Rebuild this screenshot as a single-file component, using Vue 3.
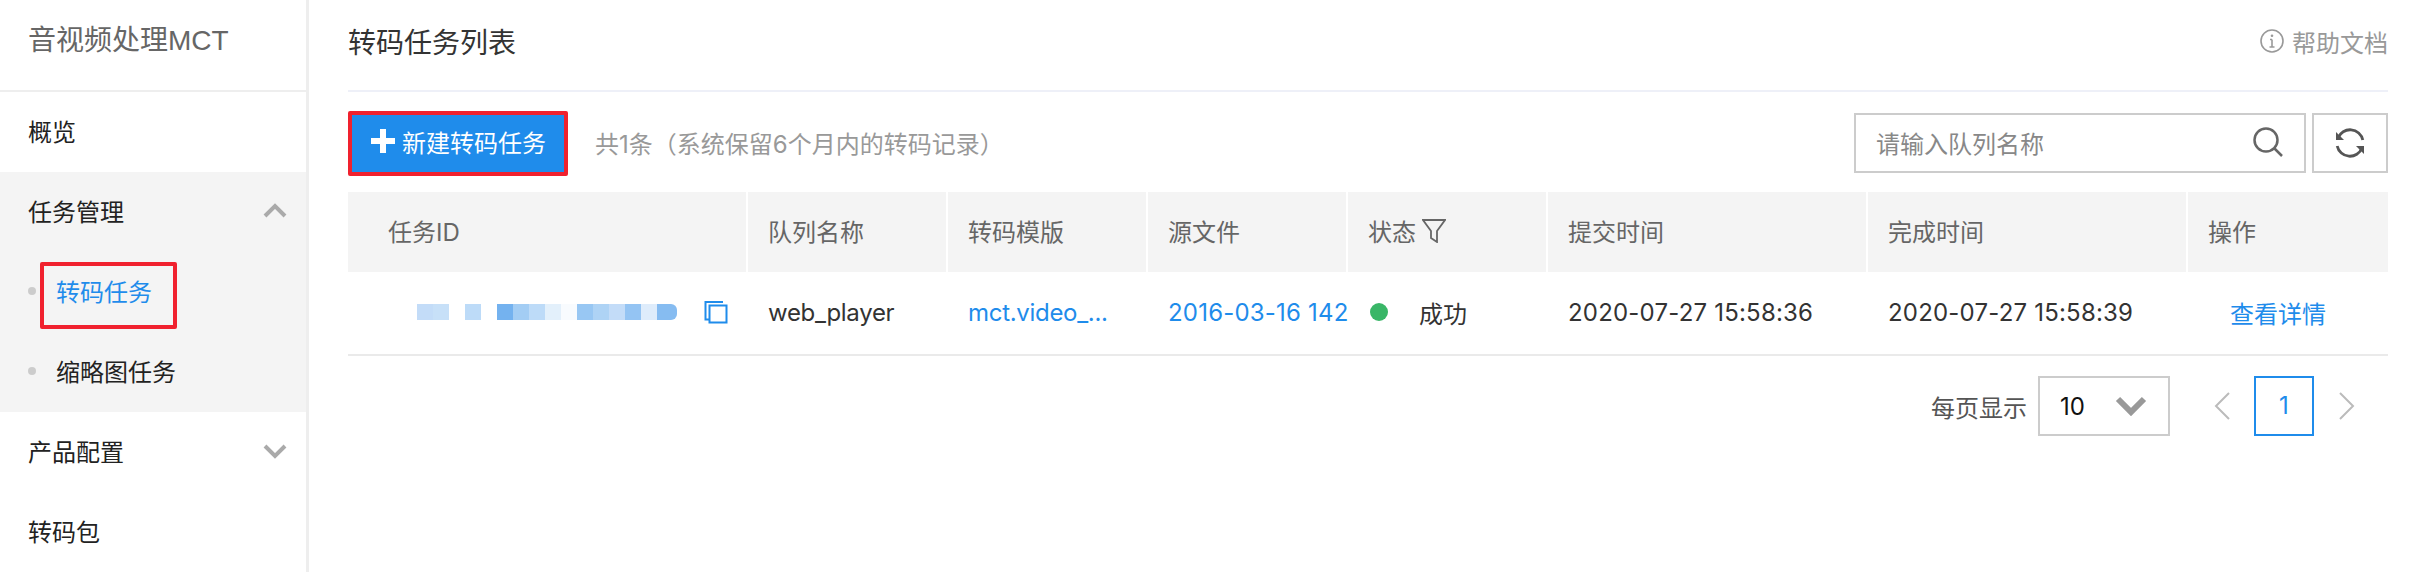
<template>
  <div class="page">
    <aside class="sidebar">
      <div class="brand">音视频处理MCT</div>
      <div class="nav-item">概览</div>
      <div class="nav-group">
        <div class="nav-item">
          任务管理
          <svg class="chevron" viewBox="0 0 24 16"><path d="M2 13 12 3l10 10" /></svg>
        </div>
        <div class="sub-item active">
          <span class="dot"></span>转码任务
          <span class="mark"></span>
        </div>
        <div class="sub-item"><span class="dot"></span>缩略图任务</div>
      </div>
      <div class="nav-item">
        产品配置
        <svg class="chevron" viewBox="0 0 24 16"><path d="M2 3l10 10L22 3" /></svg>
      </div>
      <div class="nav-item">转码包</div>
    </aside>

    <main class="content">
      <header class="top">
        <h1>转码任务列表</h1>
        <a class="help">
          <svg viewBox="0 0 24 24" width="24" height="24">
            <circle cx="12" cy="12" r="11" />
            <path d="M12 10.5V18M9.5 18h5M10 10.5h2" />
            <circle class="fill" cx="12" cy="6.8" r="1.3" />
          </svg>
          帮助文档
        </a>
      </header>

      <div class="toolbar">
        <button class="create">
          <svg viewBox="0 0 24 24" width="24" height="24"><path d="M12 0v24M0 12h24" /></svg>
          新建转码任务
        </button>
        <span class="hint">共1条（系统保留6个月内的转码记录）</span>
        <div class="search">
          <span>请输入队列名称</span>
          <svg viewBox="0 0 30 30" width="30" height="30">
            <circle cx="13" cy="13" r="11.5" />
            <path d="M21 21l8 8" />
          </svg>
        </div>
        <button class="refresh">
          <svg viewBox="0 0 32 32" width="32" height="32">
            <path d="M4 11A13 13 0 0 1 28.800 13" />
            <path d="M28 21A13 13 0 0 1 3.200 19" />
            <path class="fill" d="M2 5v8h8zM30 27v-8h-8z" />
          </svg>
        </button>
      </div>

      <div class="table">
        <div class="th first">任务ID</div>
        <div class="th">队列名称</div>
        <div class="th">转码模版</div>
        <div class="th">源文件</div>
        <div class="th">
          状态
          <svg class="filter" viewBox="0 0 24 24" width="24" height="24">
            <path d="M1 1h22l-8 11v11l-6-4v-7z" />
          </svg>
        </div>
        <div class="th">提交时间</div>
        <div class="th">完成时间</div>
        <div class="th">操作</div>

        <div class="td id-cell">
          <span class="blur">
            <i v-for="(c, i) in blurCells" :key="i" :style="{ background: c }"></i>
          </span>
          <svg class="copy" viewBox="0 0 24 24" width="24" height="24">
            <path d="M19 2H1.500v17.500H5" />
            <path d="M5.500 5.500H22.500v17H5.500z" />
          </svg>
        </div>
        <div class="td latin">web_player</div>
        <div class="td link latin">mct.video_...</div>
        <div class="td link time">2016-03-16 142</div>
        <div class="td state"><span class="ok"></span>成功</div>
        <div class="td time">2020-07-27 15:58:36</div>
        <div class="td time">2020-07-27 15:58:39</div>
        <div class="td link action">查看详情</div>
      </div>

      <div class="pager">
        <span class="per">每页显示</span>
        <div class="select">
          10
          <svg viewBox="0 0 32 20" width="32" height="20"><path d="M3 3l13 13L29 3" /></svg>
        </div>
        <svg class="arrow" viewBox="0 0 16 28" width="16" height="28"><path d="M15 1 2 14l13 13" /></svg>
        <span class="page-no">1</span>
        <svg class="arrow" viewBox="0 0 16 28" width="16" height="28"><path d="M1 1l13 13L1 27" /></svg>
      </div>
    </main>
  </div>
</template>

<script setup>
const blurCells = [
  '#c3dcf8', '#c7e0f8', '#fff', '#bddbf8', '#fff',
  '#74b2ef', '#a3cdf4', '#bddbf8', '#e3f0fb', '#f8fbfe',
  '#98c7f3', '#aed3f5', '#c3dcf8', '#94c4f3', '#deecfb', '#86bcf1'
]
</script>

<style>
html,
body {
  margin: 0;
  background: #fff;
}
</style>

<style scoped>
.page {
  display: flex;
  width: 2418px;
  height: 572px;
  overflow: hidden;
  font-family: Inter, "Noto Sans CJK SC", sans-serif;
  font-size: 24px;
  color: #333;
}
svg {
  fill: none;
  stroke: currentColor;
}
svg .fill {
  fill: currentColor;
  stroke: none;
}

.sidebar {
  width: 306px;
  flex: none;
  border-right: 3px solid #eee;
}
.brand {
  height: 82px;
  line-height: 82px;
  padding-left: 28px;
  padding-bottom: 8px;
  border-bottom: 2px solid #eee;
  font-family: "Liberation Sans", "Noto Sans CJK SC", sans-serif;
  font-size: 28px;
  color: #666;
}
.nav-item {
  display: flex;
  align-items: center;
  justify-content: space-between;
  box-sizing: border-box;
  height: 80px;
  padding: 0 19px 3px 28px;
  color: #222;
}
.nav-group {
  background: #f4f4f4;
}
.chevron {
  width: 24px;
  height: 16px;
  color: #aaa;
  stroke-width: 4;
}
.sub-item {
  position: relative;
  display: flex;
  align-items: center;
  box-sizing: border-box;
  height: 80px;
  padding: 0 0 3px 28px;
  color: #222;
}
.sub-item.active {
  color: #1f8ceb;
}
.dot {
  width: 8px;
  height: 8px;
  margin-right: 20px;
  border-radius: 50%;
  background: #ccc;
}
.mark {
  position: absolute;
  left: 40px;
  top: 10px;
  width: 129px;
  height: 59px;
  border: 4px solid #f0212e;
  border-radius: 2px;
}

.content {
  flex: 1;
  min-width: 0;
  padding: 0 30px 0 39px;
}
.top {
  display: flex;
  align-items: center;
  justify-content: space-between;
  height: 82px;
  padding-bottom: 8px;
  border-bottom: 2px solid #eef0f8;
}
h1 {
  margin: 0;
  font-size: 28px;
  font-weight: 400;
  color: #333;
}
.help {
  display: flex;
  align-items: center;
  gap: 8px;
  color: #999;
}
.help svg {
  stroke-width: 1.6;
}

.toolbar {
  display: flex;
  align-items: center;
  height: 64px;
  margin-top: 19px;
}
.create {
  display: flex;
  align-items: center;
  gap: 7px;
  width: 220px;
  height: 65px;
  padding: 0 0 4px 19px;
  border: 4px solid #f0212e;
  border-radius: 2px;
  background: #1f8ceb;
  color: #fff;
  font: inherit;
}
.create svg {
  stroke-width: 6;
}
.hint {
  margin-left: 27px;
  margin-bottom: 2px;
  color: #999;
}
.search {
  display: flex;
  align-items: center;
  justify-content: space-between;
  box-sizing: border-box;
  width: 452px;
  height: 60px;
  margin-left: auto;
  padding: 0 21px 2px 20px;
  border: 2px solid #ccc;
  color: #888;
}
.search svg {
  color: #666;
  stroke-width: 2.500;
}
.refresh {
  display: flex;
  align-items: center;
  justify-content: center;
  box-sizing: border-box;
  width: 76px;
  height: 60px;
  margin-left: 6px;
  padding: 0;
  border: 2px solid #ccc;
  background: #fff;
  color: #555;
}
.refresh svg {
  stroke-width: 2.800;
}

.table {
  display: grid;
  grid-template-columns: 400px 200px 200px 200px 200px 320px 320px 200px;
  margin-top: 17px;
}
.th {
  display: flex;
  align-items: center;
  box-sizing: border-box;
  height: 80px;
  padding: 0 0 3px 20px;
  border-right: 2px solid #fff;
  background: #f4f4f4;
  color: #666;
}
.th.first {
  padding-left: 40px;
}
.th:nth-child(8) {
  border-right: 0;
}
.filter {
  margin-left: 6px;
  color: #666;
  stroke-width: 1.800;
}
.td {
  display: flex;
  align-items: center;
  box-sizing: border-box;
  height: 84px;
  padding: 0 0 2px 20px;
  border-bottom: 2px solid #eaeaea;
  white-space: nowrap;
  overflow: hidden;
}
.latin {
  letter-spacing: -0.3px;
}
.time {
  letter-spacing: 0.2px;
}
.link {
  color: #1f8ceb;
}
.id-cell {
  padding-left: 69px;
}
.blur {
  display: flex;
  height: 16px;
}
.blur i {
  display: block;
  width: 16px;
  height: 16px;
}
.blur i:last-child {
  width: 20px;
  border-radius: 0 6px 6px 0;
}
.copy {
  margin-left: 27px;
  color: #1f8ceb;
  stroke-width: 2;
}
.state {
  padding-left: 22px;
}
.ok {
  width: 18px;
  height: 18px;
  margin-right: 31px;
  border-radius: 50%;
  background: #39b667;
}
.action {
  padding-left: 42px;
}

.pager {
  display: flex;
  align-items: center;
  justify-content: flex-end;
  margin-top: 20px;
}
.per {
  margin-right: 11px;
  color: #555;
}
.select {
  display: flex;
  align-items: center;
  justify-content: space-between;
  box-sizing: border-box;
  width: 132px;
  height: 60px;
  padding: 0 21px 0 20px;
  border: 2px solid #ccc;
  color: #111;
}
.select svg {
  color: #999;
  stroke-width: 6;
}
.arrow {
  color: #bbb;
  stroke-width: 2;
}
.pager .arrow:nth-of-type(1) {
  margin: 0 24px 0 44px;
}
.page-no {
  box-sizing: border-box;
  width: 60px;
  height: 60px;
  line-height: 56px;
  text-align: center;
  border: 2px solid #1f8ceb;
  color: #1f8ceb;
}
.pager .arrow:last-child {
  margin: 0 33px 0 25px;
}
</style>
